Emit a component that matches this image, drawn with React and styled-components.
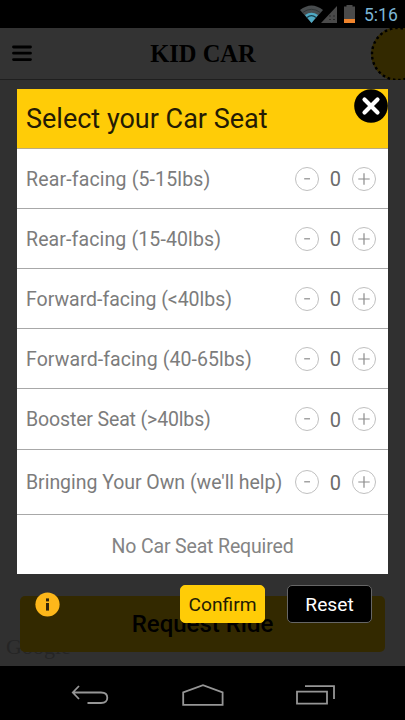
import { useState } from "react"
import styled, { createGlobalStyle } from "styled-components"

const SEATS = [
    { id: "rear-small", label: "Rear-facing (5-15lbs)", spacing: 0.15 },
    { id: "rear-large", label: "Rear-facing (15-40lbs)", spacing: 0.13 },
    { id: "forward-small", label: "Forward-facing (<40lbs)", spacing: -0.02 },
    { id: "forward-large", label: "Forward-facing (40-65lbs)", spacing: 0.08 },
    { id: "booster", label: "Booster Seat (>40lbs)", spacing: -0.14, height: 61 },
    { id: "own", label: "Bringing Your Own (we'll help)", spacing: -0.04, height: 65 },
]

const EMPTY = Object.fromEntries(SEATS.map((seat) => [seat.id, 0]))

const App = () => {
    const [counts, setCounts] = useState(EMPTY)

    const change = (id, step) => {
        setCounts({ ...counts, [id]: Math.max(0, counts[id] + step) })
    }

    return (
        <Screen>
            <GlobalStyle />
            <StatusBar>
                <svg width="56" height="18" viewBox="0 0 56 18">
                    <path d="M0 5 Q11.5 -4 23 5 L11.5 18 Z" fill="#484c4e" />
                    <path d="M2.5 7.6 Q11.5 1 20.5 7.6" fill="none" stroke="#303638" strokeWidth="1" />
                    <path d="M5 10 Q11.5 5.5 18 10 L11.5 18 Z" fill="#4fa9c4" />
                    <path d="M7 12.4 Q11.5 9 16 12.4" fill="none" stroke="#173a46" strokeWidth="1.2" />
                    <path d="M37 1 V18 H21 Z" fill="#4a4a4a" />
                    <path d="M29 11 h8 M29 14.5 h8" stroke="#292929" strokeDasharray="2 2" />
                    <path d="M46.5 0 h6 v1.5 h2.5 V18 H44 V1.5 h2.5 Z" fill="#4a4a4a" />
                    <rect x="44" y="14" width="11" height="4" fill="#f0842c" />
                </svg>
                <Clock>5:16</Clock>
            </StatusBar>
            <Page>
                <AppBar>
                    <svg width="20" height="17" viewBox="0 0 20 17">
                        <path d="M1.5 2 H18.5 M1.5 8.2 H18.5 M1.5 14.6 H18.5" stroke="#000" strokeWidth="2.8" strokeLinecap="round" />
                    </svg>
                    <Brand>KID CAR</Brand>
                    <Badge width="35" height="52" viewBox="0 0 35 52">
                        <circle cx="28" cy="26" r="27" fill="#ffcc00" />
                        <circle cx="28" cy="26" r="26" fill="none" stroke="#000" strokeWidth="2.4" strokeDasharray="2.6 2.8" />
                    </Badge>
                </AppBar>
                <MapArea>
                    <MapLogo>Google</MapLogo>
                    <RequestButton>Request Ride</RequestButton>
                </MapArea>
                <Overlay>
                    <Dialog>
                        <DialogHeader>
                            Select your Car Seat
                            <CloseButton aria-label="Close">
                                <svg width="34" height="34" viewBox="0 0 34 34">
                                    <circle cx="17" cy="17" r="16.8" fill="#000" />
                                    <path d="M10.5 10.5 L23.5 23.5 M23.5 10.5 L10.5 23.5" stroke="#fff" strokeWidth="4.2" strokeLinecap="round" />
                                </svg>
                            </CloseButton>
                        </DialogHeader>
                        {SEATS.map((seat) => (
                            <SeatRow key={seat.id} $height={seat.height}>
                                <SeatLabel $spacing={seat.spacing}>{seat.label}</SeatLabel>
                                <StepButton aria-label="Remove" onClick={() => change(seat.id, -1)}>
                                    <svg width="12" height="12" viewBox="0 0 12 12">
                                        <path d="M3.2 5.8 H9" stroke="#8c8c8c" strokeWidth="1.2" />
                                    </svg>
                                </StepButton>
                                <Count>{counts[seat.id]}</Count>
                                <StepButton aria-label="Add" onClick={() => change(seat.id, 1)}>
                                    <svg width="12" height="12" viewBox="0 0 12 12">
                                        <path d="M0.3 6 H11.7 M6 0.3 V11.7" stroke="#8c8c8c" strokeWidth="1.2" />
                                    </svg>
                                </StepButton>
                            </SeatRow>
                        ))}
                        <NoSeat>No Car Seat Required</NoSeat>
                    </Dialog>
                    <Actions>
                        <svg width="25" height="25" viewBox="0 0 25 25">
                            <circle cx="12.5" cy="12.5" r="12.1" fill="#fdb71a" />
                            <rect x="11" y="6.4" width="3" height="3" fill="#33260a" />
                            <rect x="11" y="11" width="3" height="7.6" fill="#33260a" />
                        </svg>
                        <ActionButton>Confirm</ActionButton>
                        <ActionButton $dark onClick={() => setCounts(EMPTY)}>Reset</ActionButton>
                    </Actions>
                </Overlay>
            </Page>
            <NavBar>
                <svg width="38" height="20" viewBox="0 0 38 20">
                    <path d="M8 1 L1.8 7.5 L8 14 M2 7.5 H30 Q36.3 7.5 36.3 12.8 Q36.3 18 30 18 H16.5" fill="none" stroke="#969696" strokeWidth="1.8" />
                </svg>
                <svg width="42" height="22" viewBox="0 0 42 22">
                    <path d="M1.2 20.8 V8.3 L21 1.2 L40.6 8.3 V20.8 Z" fill="none" stroke="#969696" strokeWidth="1.8" />
                </svg>
                <svg width="39" height="20" viewBox="0 0 39 20">
                    <path d="M1 6.6 H31 V18.6 H1 Z M9 1.2 H38 V14" fill="none" stroke="#969696" strokeWidth="1.8" />
                </svg>
            </NavBar>
        </Screen>
    )
}

const GlobalStyle = createGlobalStyle`
    * {
        box-sizing: border-box;
    }
    body {
        margin: 0;
        background-color: #000;
        font-family: Roboto, "Liberation Sans", sans-serif;
    }
    button {
        margin: 0;
        padding: 0;
        border: none;
        font-family: inherit;
    }
    svg {
        display: block;
        flex-shrink: 0;
    }
`

const Screen = styled.div`
    display: flex;
    flex-direction: column;
    width: 405px;
    height: 720px;
    overflow: hidden;
    background-color: #000;
`

const StatusBar = styled.div`
    display: flex;
    align-items: center;
    justify-content: flex-end;
    flex-shrink: 0;
    height: 28px;
    padding-right: 7px;
`

const Clock = styled.span`
    width: 34px;
    margin-left: 8px;
    font-size: 17.5px;
    line-height: 20px;
    color: #7cb6d6;
    padding-top: 1px;
`

const Page = styled.div`
    display: flex;
    flex-direction: column;
    position: relative;
    height: 638px;
`

const AppBar = styled.div`
    display: flex;
    align-items: center;
    justify-content: space-between;
    flex-shrink: 0;
    height: 52px;
    padding-left: 12px;
    background-color: #fff;
    border-bottom: 1px solid #999;
`

const Brand = styled.h1`
    margin: 0 0 0 4px;
    font-family: "Liberation Serif", serif;
    font-size: 24.5px;
    font-weight: bold;
    color: #000;
`

const Badge = styled.svg`
    overflow: hidden;
`

const MapArea = styled.div`
    display: flex;
    flex-direction: column;
    justify-content: flex-end;
    flex: 1;
    position: relative;
    padding: 0 20px 14px;
    background-color: #f0f0f0;
`

const MapLogo = styled.span`
    position: absolute;
    left: 6px;
    bottom: 6px;
    font-family: "Liberation Serif", serif;
    font-size: 22px;
    color: #b8b8b8;
`

const RequestButton = styled.button`
    position: relative;
    height: 56px;
    border-radius: 5px;
    background-color: #ffcc00;
    font-size: 24px;
    font-weight: 500;
    color: #000;
`

const Overlay = styled.div`
    position: absolute;
    inset: 0;
    padding: 61px 17px 0;
    background-color: rgba(0, 0, 0, 0.8);
`

const Dialog = styled.div`
    height: 485px;
    background-color: #fff;
`

const DialogHeader = styled.div`
    display: flex;
    align-items: center;
    position: relative;
    height: 60px;
    padding: 1px 0 0 9px;
    background-color: #ffcc07;
    border-bottom: 1px solid #b9ab83;
    font-size: 27px;
    color: #241b04;
`

const CloseButton = styled.button`
    position: absolute;
    top: 0;
    right: 0;
    background: none;
`

const SeatRow = styled.div`
    display: flex;
    align-items: center;
    height: ${(props) => props.$height || 60}px;
    padding: 0 12.5px 0 9px;
    border-bottom: 1px solid #a8a8a8;
`

const SeatLabel = styled.span`
    flex: 1;
    white-space: nowrap;
    font-size: 19.5px;
    letter-spacing: ${(props) => props.$spacing}px;
    color: #7c7c7c;
    padding-top: 1px;
`

const StepButton = styled.button`
    display: flex;
    align-items: center;
    justify-content: center;
    width: 24px;
    height: 24px;
    border: 1px solid #c0c0c0;
    border-radius: 50%;
    background-color: #fff;
`

const Count = styled.span`
    width: 32.5px;
    text-align: center;
    font-size: 20px;
    color: #6c6c6c;
    padding-top: 1px;
`

const NoSeat = styled.div`
    display: flex;
    align-items: center;
    justify-content: center;
    height: 59px;
    padding-top: 3px;
    font-size: 19.5px;
    letter-spacing: -0.15px;
    color: #848484;
`

const Actions = styled.div`
    display: flex;
    align-items: center;
    padding: 11px 16px 0 18px;
    svg {
        margin-right: auto;
    }
`

const ActionButton = styled.button`
    width: 85px;
    height: 38px;
    margin-left: ${(props) => (props.$dark ? "22px" : "0")};
    border: 1px solid ${(props) => (props.$dark ? "#666" : "#ffcc07")};
    border-radius: 5px;
    background-color: ${(props) => (props.$dark ? "#000" : "#ffcc07")};
    font-size: 19.2px;
    color: ${(props) => (props.$dark ? "#fff" : "#241b04")};
`

const NavBar = styled.div`
    display: flex;
    align-items: center;
    justify-content: space-between;
    flex: 1;
    padding: 3px 70px 0 71px;
`

export default App
